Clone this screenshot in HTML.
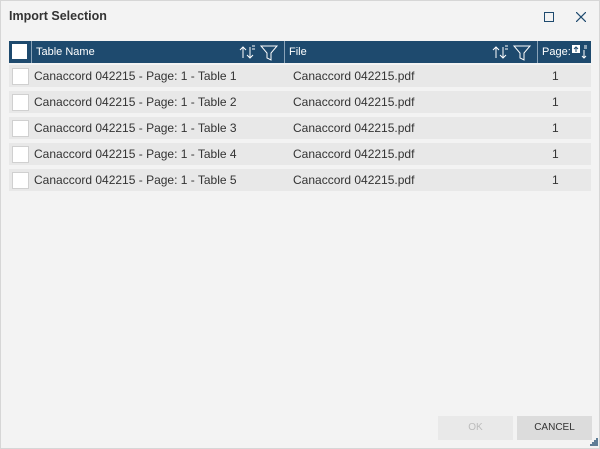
<!DOCTYPE html><html><head><style>
body{margin:0;width:600px;height:449px;background:#f3f3f3;font-family:"Liberation Sans",sans-serif;overflow:hidden;position:relative}
.frame{position:absolute;left:0;top:0;width:598px;height:447px;border:1px solid #d6d6d6}
.title{position:absolute;left:9px;top:9px;font-size:12.5px;font-weight:bold;color:#333}
.hdr{position:absolute;left:9px;top:41px;width:582px;height:22px;background:#1e4a6e;color:#fff;font-size:11px}
.hdr>div{position:absolute;top:0;height:22px;line-height:23px;border-left:1px solid #8aa3b8}
.cb{position:absolute;width:15px;height:15px;background:#fff;border:1px solid #d0d0d0}
.row{position:absolute;left:9px;width:582px;height:22px;background:#e8e8e8;font-size:12px;color:#333;line-height:22px}
.row span{position:absolute}
.btn{position:absolute;top:416px;height:24px;line-height:24px;text-align:center;font-size:10px}
</style></head><body><div class="frame"></div>
<div class="title">Import Selection</div>
<div style="position:absolute;left:544px;top:12px;width:8px;height:8px;border:1.3px solid #1e4a6e"></div>
<svg style="position:absolute;left:576px;top:12px" width="10" height="10"><path d="M0 0L10 10M10 0L0 10" stroke="#1e4a6e" stroke-width="1.2"/></svg>
<div class="hdr">
<div style="left:0;border:none;width:22px"><span style="position:absolute;left:3px;top:3px;width:15px;height:15px;background:#fff"></span></div>
<div style="left:22px;width:249px;padding-left:4px">Table Name
<svg style="position:absolute;left:207px;top:3px" width="40" height="17"><path d="M4 14V3M1 6l3-3 3 3M11 3v11M8 11l3 3 3-3M13 2h3M13 5h3" stroke="#fff" fill="none"/><path d="M22 2h16l-6 7v7l-4-2V9z" stroke="#fff" fill="none"/></svg></div>
<div style="left:275px;width:249px;padding-left:4px">File
<svg style="position:absolute;left:207px;top:3px" width="40" height="17"><path d="M4 14V3M1 6l3-3 3 3M11 3v11M8 11l3 3 3-3M13 2h3M13 5h3" stroke="#fff" fill="none"/><path d="M22 2h16l-6 7v7l-4-2V9z" stroke="#fff" fill="none"/></svg></div>
<div style="left:528px;width:50px;padding-left:4px">Page:
<svg style="position:absolute;left:33px;top:3px" width="20" height="17"><rect x="1" y="1" width="8" height="8" fill="#fff"/><path d="M5 8V3M3 5l2-2 2 2" stroke="#1e4a6e" fill="none"/><path d="M13 6v8M11 12l2 2 2-2M13 2h3M13 4h3" stroke="#fff" fill="none"/></svg></div>
</div>
<div class="row" style="top:65px"><div class="cb" style="left:3px;top:3px"></div><span style="left:25px">Canaccord 042215 - Page: 1 - Table 1</span><span style="left:284px">Canaccord 042215.pdf</span><span style="left:543px">1</span></div>
<div class="row" style="top:91px"><div class="cb" style="left:3px;top:3px"></div><span style="left:25px">Canaccord 042215 - Page: 1 - Table 2</span><span style="left:284px">Canaccord 042215.pdf</span><span style="left:543px">1</span></div>
<div class="row" style="top:117px"><div class="cb" style="left:3px;top:3px"></div><span style="left:25px">Canaccord 042215 - Page: 1 - Table 3</span><span style="left:284px">Canaccord 042215.pdf</span><span style="left:543px">1</span></div>
<div class="row" style="top:143px"><div class="cb" style="left:3px;top:3px"></div><span style="left:25px">Canaccord 042215 - Page: 1 - Table 4</span><span style="left:284px">Canaccord 042215.pdf</span><span style="left:543px">1</span></div>
<div class="row" style="top:169px"><div class="cb" style="left:3px;top:3px"></div><span style="left:25px">Canaccord 042215 - Page: 1 - Table 5</span><span style="left:284px">Canaccord 042215.pdf</span><span style="left:543px">1</span></div>
<div class="btn" style="left:438px;width:75px;background:#e9e9e9;color:#bbb">OK</div>
<div class="btn" style="left:517px;width:75px;background:#dcdcdc;color:#333">CANCEL</div>
<svg style="position:absolute;left:590px;top:438px" width="8" height="8"><path d="M6 0h2v8H0V6h2V4h2V2h2z" fill="#1e4a6e" opacity=".7"/></svg>
</body></html>
